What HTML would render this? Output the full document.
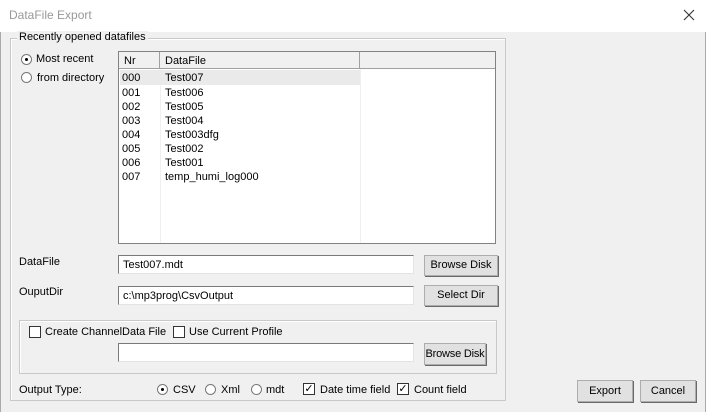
<!DOCTYPE html><html><head><style>
body{margin:0;width:706px;height:412px;background:#f0f0f0;position:relative;overflow:hidden;font-family:"Liberation Sans",sans-serif;font-size:11px;color:#000}
.a{position:absolute}
.t{white-space:nowrap}
.inp{position:absolute;background:#fff;border:1px solid #7a7a7a;border-right-color:#e3e3e3;border-bottom-color:#e3e3e3;box-sizing:border-box;padding:3px 4px;font-size:11px;white-space:nowrap}
.btn{position:absolute;background:#e1e1e1;border:1px solid #adadad;box-sizing:border-box;box-shadow:1px 1px 0 #696969;text-align:center;font-size:11px;line-height:19px;white-space:nowrap;overflow:hidden}
.grp{position:absolute;border:1px solid #c9c9c9;box-shadow:inset 1px 1px 0 #fff}
.rad{position:absolute;width:11px;height:11px;border-radius:50%;border:1px solid #777;background:#fff;box-sizing:border-box}
.rad.on::after{content:"";position:absolute;left:3px;top:3px;width:3px;height:3px;border-radius:50%;background:#000}
.cb{position:absolute;width:12px;height:12px;border:1px solid #333;background:#fff;box-sizing:border-box;font-size:11px;line-height:10px;text-align:center}
.row{position:absolute;left:122px;height:14px;line-height:14px}
</style></head><body>
<div class="a" style="left:0;top:0;width:706px;height:32px;background:#fff"></div>
<div class="a t" style="left:9px;top:8px;font-size:12px;color:#999">DataFile Export</div>
<svg class="a" style="left:683px;top:9px" width="12" height="12"><path d="M1 1L11 11M11 1L1 11" stroke="#333" stroke-width="1.1"/></svg>
<div class="a" style="left:0;top:32px;width:1px;height:380px;background:#aaa"></div>
<div class="a" style="right:0;top:32px;width:1px;height:380px;background:#aaa"></div>

<div class="grp" style="left:10px;top:38px;width:494px;height:361px"></div>
<div class="a t" style="left:17px;top:31px;background:#f0f0f0;padding:0 2px">Recently opened datafiles</div>
<div class="rad on" style="left:21px;top:54px"></div><div class="a t" style="left:36px;top:53px">Most recent</div>
<div class="rad" style="left:21px;top:72px"></div><div class="a t" style="left:37px;top:72px">from directory</div>

<div class="a" style="left:118px;top:51px;width:378px;height:193px;background:#fff;border:1px solid #828282;box-sizing:border-box"></div>
<div class="a" style="left:119px;top:52px;width:376px;height:16px;background:#f0f0f0;border-bottom:1px solid #a0a0a0"></div>
<div class="a" style="left:159px;top:52px;width:1px;height:16px;background:#a0a0a0"></div>
<div class="a" style="left:359px;top:52px;width:1px;height:16px;background:#a0a0a0"></div>
<div class="a t" style="left:124px;top:55px">Nr</div><div class="a t" style="left:165px;top:55px">DataFile</div>
<div class="a" style="left:160px;top:69px;width:1px;height:174px;background:#f0f0f0"></div>
<div class="a" style="left:360px;top:69px;width:1px;height:174px;background:#f0f0f0"></div>
<div class="a" style="left:120px;top:70px;width:240px;height:15px;background:#eaeaea"></div>
<div class="row t" style="top:71px">000</div><div class="row t" style="top:71px;left:165px">Test007</div>
<div class="row t" style="top:86px">001</div><div class="row t" style="top:86px;left:165px">Test006</div>
<div class="row t" style="top:100px">002</div><div class="row t" style="top:100px;left:165px">Test005</div>
<div class="row t" style="top:114px">003</div><div class="row t" style="top:114px;left:165px">Test004</div>
<div class="row t" style="top:128px">004</div><div class="row t" style="top:128px;left:165px">Test003dfg</div>
<div class="row t" style="top:142px">005</div><div class="row t" style="top:142px;left:165px">Test002</div>
<div class="row t" style="top:156px">006</div><div class="row t" style="top:156px;left:165px">Test001</div>
<div class="row t" style="top:170px">007</div><div class="row t" style="top:170px;left:165px">temp_humi_log000</div>

<div class="a t" style="left:19px;top:256px">DataFile</div>
<div class="inp" style="left:118px;top:255px;width:296px;height:19px">Test007.mdt</div>
<div class="btn" style="left:424px;top:255px;width:74px;height:21px">Browse Disk</div>
<div class="a t" style="left:19px;top:286px">OuputDir</div>
<div class="inp" style="left:118px;top:286px;width:296px;height:19px">c:\mp3prog\CsvOutput</div>
<div class="btn" style="left:424px;top:285px;width:74px;height:21px">Select Dir</div>

<div class="grp" style="left:19px;top:320px;width:476px;height:52px"></div>
<div class="cb" style="left:29px;top:326px"></div><div class="a t" style="left:45px;top:326px">Create ChannelData File</div>
<div class="cb" style="left:173px;top:326px"></div><div class="a t" style="left:189px;top:326px">Use Current Profile</div>
<div class="inp" style="left:118px;top:343px;width:296px;height:19px"></div>
<div class="btn" style="left:424px;top:343px;width:62px;height:22px;line-height:20px;letter-spacing:-0.2px">Browse Disk</div>

<div class="a t" style="left:19px;top:384px">Output Type:</div>
<div class="rad on" style="left:157px;top:384px"></div><div class="a t" style="left:173px;top:384px">CSV</div>
<div class="rad" style="left:205px;top:384px"></div><div class="a t" style="left:221px;top:384px">Xml</div>
<div class="rad" style="left:251px;top:384px"></div><div class="a t" style="left:266px;top:384px">mdt</div>
<div class="cb" style="left:303px;top:383px">✓</div><div class="a t" style="left:320px;top:384px">Date time field</div>
<div class="cb" style="left:397px;top:383px">✓</div><div class="a t" style="left:414px;top:384px">Count field</div>

<div class="btn" style="left:577px;top:380px;width:56px;height:22px;line-height:20px">Export</div>
<div class="btn" style="left:640px;top:380px;width:56px;height:22px;line-height:20px">Cancel</div>
</body></html>
